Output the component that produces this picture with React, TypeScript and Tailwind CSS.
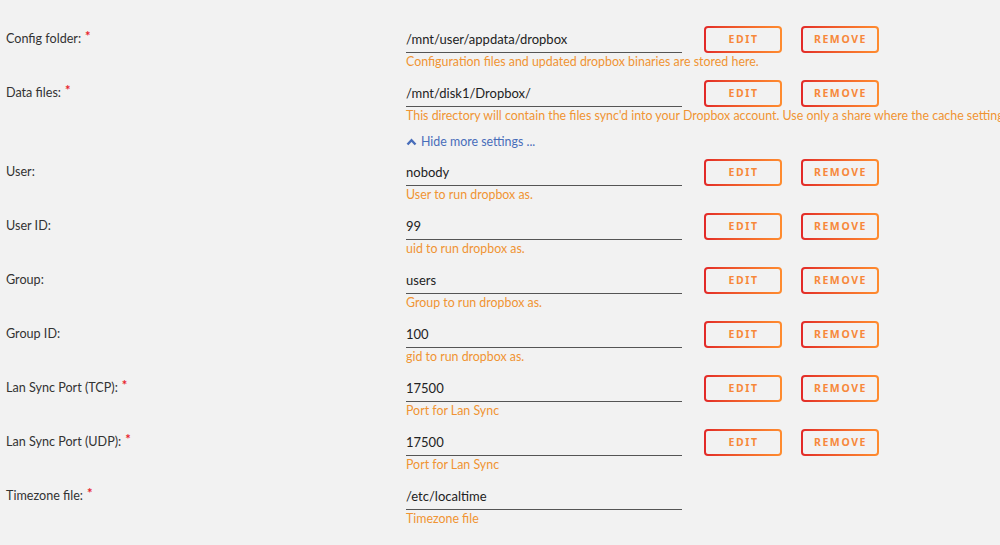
import React from "react";

type Row = { label: string; req?: boolean; value: string; desc: string; buttons?: boolean };

const top: Row[] = [
  { label: "Config folder:", req: true, value: "/mnt/user/appdata/dropbox", desc: "Configuration files and updated dropbox binaries are stored here.", buttons: true },
  { label: "Data files:", req: true, value: "/mnt/disk1/Dropbox/", desc: "This directory will contain the files sync'd into your Dropbox account. Use only a share where the cache setting is set to no.", buttons: true },
];

const rest: Row[] = [
  { label: "User:", value: "nobody", desc: "User to run dropbox as.", buttons: true },
  { label: "User ID:", value: "99", desc: "uid to run dropbox as.", buttons: true },
  { label: "Group:", value: "users", desc: "Group to run dropbox as.", buttons: true },
  { label: "Group ID:", value: "100", desc: "gid to run dropbox as.", buttons: true },
  { label: "Lan Sync Port (TCP):", req: true, value: "17500", desc: "Port for Lan Sync", buttons: true },
  { label: "Lan Sync Port (UDP):", req: true, value: "17500", desc: "Port for Lan Sync", buttons: true },
  { label: "Timezone file:", req: true, value: "/etc/localtime", desc: "Timezone file" },
];

function Btn({ children }: { children: React.ReactNode }) {
  return (
    <div className="w-[78px] h-[27px] rounded-[4px] p-[2px] bg-linear-to-r from-[#e22828] to-[#ff8c2f]">
      <div className="w-full h-full rounded-[2px] bg-[#f2f2f2] flex items-center justify-center text-[10.5px] font-bold tracking-[1.6px] text-[#f7883a] pl-[1px] font-['Noto_Sans',sans-serif]">
        {children}
      </div>
    </div>
  );
}

function FieldRow({ r }: { r: Row }) {
  return (
    <div className="flex h-[54px] items-start">
      <div className="w-[406px] pl-[6px] h-[27px] flex items-center text-[#333] text-[12.6px] whitespace-nowrap">
        {r.label}
        {r.req && <span className="text-[#e8232b] ml-[4px] text-[13px] font-bold relative -top-[3px]">*</span>}
      </div>
      <div className="w-[276px] shrink-0">
        <div className="h-[27px] flex items-center border-b border-[#555] text-[13px] text-[#222] pt-[1px]">{r.value}</div>
        <div className="h-[18px] flex items-center text-[12.4px] text-[#f09433] whitespace-nowrap pt-[1px]">{r.desc}</div>
      </div>
      {r.buttons && (
        <div className="flex ml-[22px] gap-[19px] shrink-0">
          <Btn>EDIT</Btn>
          <Btn>REMOVE</Btn>
        </div>
      )}
    </div>
  );
}

export default function App() {
  return (
    <div className="w-[1000px] h-[545px] bg-[#f2f2f2] overflow-hidden pt-[26px] font-['Lato',sans-serif]">
      {top.map((r) => (
        <FieldRow key={r.label} r={r} />
      ))}
      <div className="h-[25px] pl-[406px] flex items-start">
        <div className="flex items-center gap-[4px] text-[12.4px] text-[#486dba] leading-[16px]">
          <svg width="11" height="8" viewBox="0 0 11 8">
            <polyline points="1.5,6.5 5.5,2.2 9.5,6.5" fill="none" stroke="#486dba" strokeWidth="2.4" />
          </svg>
          Hide more settings ...
        </div>
      </div>
      {rest.map((r) => (
        <FieldRow key={r.label} r={r} />
      ))}
    </div>
  );
}
